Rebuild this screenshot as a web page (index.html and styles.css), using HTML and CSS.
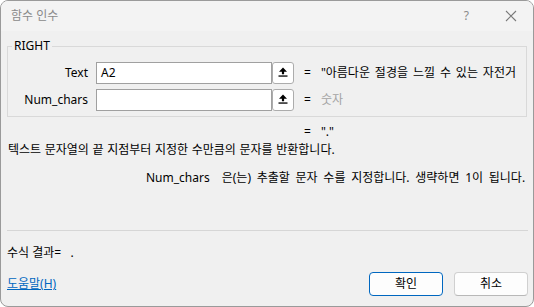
FILE: index.html
```html
<!DOCTYPE html>
<html lang="ko">
<head>
<meta charset="utf-8">
<title>함수 인수</title>
<link rel="stylesheet" href="styles.css">
</head>
<body>
<div class="window">
  <div class="titlebar">
    <span class="title">함수 인수</span>
    <span class="help">?</span>
    <svg class="close" width="12" height="12" viewBox="0 0 12 12"><path d="M1 1L11 11M11 1L1 11" stroke="#7a7a7a" stroke-width="1.1" fill="none"/></svg>
  </div>
  <div class="content">
    <div class="group">
      <span class="legend">RIGHT</span>
      <div class="row">
        <span class="label">Text</span>
        <span class="input">A2</span>
        <span class="pick"><svg width="10" height="10" viewBox="0 0 10 10"><path d="M5 0.5L9 4.8H6.1V7.3H3.9V4.8H1Z" fill="#000"/><rect x="0.5" y="8.4" width="9" height="1.3" fill="#000"/></svg></span>
        <span class="eq">=</span>
        <span class="value">"아름다운 절경을 느낄 수 있는 자전거 여행"</span>
      </div>
      <div class="row">
        <span class="label">Num_chars</span>
        <span class="input"></span>
        <span class="pick"><svg width="10" height="10" viewBox="0 0 10 10"><path d="M5 0.5L9 4.8H6.1V7.3H3.9V4.8H1Z" fill="#000"/><rect x="0.5" y="8.4" width="9" height="1.3" fill="#000"/></svg></span>
        <span class="eq">=</span>
        <span class="value hint">숫자</span>
      </div>
    </div>
    <div class="result-row"><span class="eq">=</span><span>"."</span></div>
    <p class="desc">텍스트 문자열의 끝 지점부터 지정한 수만큼의 문자를 반환합니다.</p>
    <p class="argdesc"><span class="argname">Num_chars</span><span>은(는) 추출할 문자 수를 지정합니다. 생략하면 1이 됩니다.</span></p>
    <div class="footer">
      <p class="formula">수식 결과=&nbsp;&nbsp;&nbsp;.</p>
      <div class="actions">
        <a class="link" href="#">도움말(H)</a>
        <button class="btn primary">확인</button>
        <button class="btn">취소</button>
      </div>
    </div>
  </div>
</div>
</body>
</html>
```
FILE: styles.css
```css
* { box-sizing: border-box; }
html, body { margin: 0; padding: 0; }
body {
  background: #ffffff;
  font-family: "Noto Sans", "Noto Sans CJK KR", sans-serif;
  font-size: 12px;
  line-height: 16px;
  color: #000;
}
.window {
  width: 534px;
  height: 307px;
  border: 1px solid #9a9a9a;
  border-radius: 8px;
  background: #f0f0f0;
  overflow: hidden;
  display: flex;
  flex-direction: column;
}
.titlebar {
  height: 30px;
  background: #f3f3f3;
  display: flex;
  align-items: center;
  padding: 0 16px 0 10px;
  flex-shrink: 0;
}
.title { color: #8a8a8a; flex: 1; }
.help { color: #8a8a8a; margin-right: 36px; font-size: 12px; }
.close { display: block; }
.content {
  flex: 1;
  display: flex;
  flex-direction: column;
  padding: 0 6px 10px 6px;
}
.group {
  position: relative;
  margin-top: 15px;
  border: 1px solid #d9d9d9;
  padding: 15px 0 5px 0;
  display: flex;
  flex-direction: column;
  gap: 5px;
}
.legend {
  position: absolute;
  top: -9px;
  left: 4px;
  padding: 0 2px;
  background: #f0f0f0;
}
.row {
  display: flex;
  align-items: center;
  height: 22px;
}
.label {
  width: 80px;
  text-align: right;
  margin-right: 8px;
}
.input {
  width: 176px;
  height: 22px;
  background: #fff;
  border: 1px solid #a0a0a0;
  padding: 2px 4px;
}
.pick {
  width: 22px;
  height: 22px;
  background: #fff;
  border: 1px solid #acacac;
  border-radius: 3px;
  display: flex;
  align-items: flex-start;
  justify-content: center;
  padding-top: 4px;
}
.eq { margin: 0 10px 0 10px; }
.value {
  flex: 1;
  white-space: nowrap;
  overflow: hidden;
  margin-right: 6px;
  word-spacing: 1.8px;
}
.hint { color: #a3a3a3; }
.result-row {
  margin-top: 7px;
  padding-left: 287px;
  display: flex;
}
.desc { margin: 2px 0 0 1px; word-spacing: 0.5px; }
.argdesc {
  margin: 12px 0 0 139px;
  display: flex;
  gap: 12px;
  white-space: nowrap;
  word-spacing: 2.6px;
}
.footer {
  margin-top: auto;
  border-top: 1px solid #d6d6d6;
  margin-right: -1px;
}
.formula { margin: 14px 0 0 0; }
.actions {
  display: flex;
  align-items: center;
  margin-top: 11px;
}
.link {
  color: #0067c0;
  text-decoration: underline;
  flex: 1;
}
.btn {
  width: 74px;
  height: 24px;
  font: inherit;
  background: #fdfdfd;
  border: 1px solid #d0d0d0;
  border-bottom-color: #b8b8b8;
  border-radius: 4px;
  margin-left: 11px;
  color: #000;
  padding: 0;
}
.btn.primary { border: 1px solid #0067c0; }
```
